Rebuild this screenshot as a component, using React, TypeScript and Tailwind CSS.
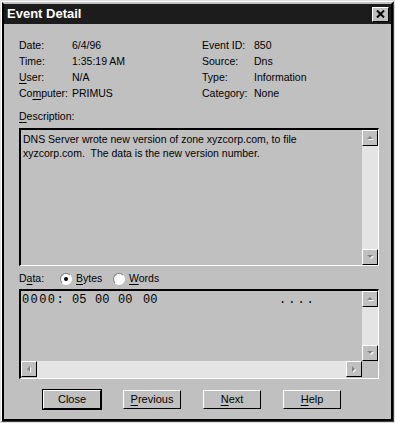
import React from 'react';

const font = { fontFamily: '"Liberation Sans", Arial, sans-serif' };

function U({ children }: { children: React.ReactNode }) {
  return <span className="underline underline-offset-[2px]">{children}</span>;
}

function Arrow({ dir }: { dir: 'up' | 'down' | 'left' | 'right' }) {
  const pts = {
    up: '2,6 5,3 8,6',
    down: '2,3 5,6 8,3',
    left: '6,2 3,5 6,8',
    right: '3,2 6,5 3,8',
  }[dir];
  return (
    <svg width="10" height="10" viewBox="0 0 10 10">
      <polygon points={pts} fill="#ffffff" transform="translate(1,1)" />
      <polygon points={pts} fill="#808080" />
    </svg>
  );
}

function ScrollBtn({ dir }: { dir: 'up' | 'down' | 'left' | 'right' }) {
  return (
    <div className="w-[16px] h-[16px] bg-[#c0c0c0] border-t border-l border-t-white border-l-white border-r border-b border-r-black border-b-black flex items-center justify-center shrink-0">
      <Arrow dir={dir} />
    </div>
  );
}

function VScroll() {
  return (
    <div className="w-[16px] flex flex-col h-full">
      <ScrollBtn dir="up" />
      <div className="flex-1 bg-[#e4e4e4]" />
      <ScrollBtn dir="down" />
    </div>
  );
}

function Radio({ on }: { on: boolean }) {
  return (
    <span className="inline-flex w-[12px] h-[12px] rounded-full bg-white border border-t-[#808080] border-l-[#808080] border-r-white border-b-white items-center justify-center">
      {on && <span className="w-[4px] h-[4px] rounded-full bg-black" />}
    </span>
  );
}

function Btn({ children, def }: { children: React.ReactNode; def?: boolean }) {
  return (
    <div className={def ? 'border border-black' : 'border border-transparent'}>
      <div className="w-[58px] h-[19px] bg-[#c0c0c0] border-t border-l border-t-white border-l-white border-r border-b border-r-black border-b-black flex items-center justify-center text-[11px] text-black">
        {children}
      </div>
    </div>
  );
}

export default function App() {
  const left = [
    ['Date:', '6/4/96'],
    ['Time:', '1:35:19 AM'],
    [<><U>U</U>ser:</>, 'N/A'],
    [<>Co<U>m</U>puter:</>, 'PRIMUS'],
  ];
  const right = [
    ['Event ID:', '850'],
    ['Source:', 'Dns'],
    ['Type:', 'Information'],
    ['Category:', 'None'],
  ];

  return (
    <div
      className="w-[395px] h-[423px] bg-[#c0c0c0] border border-[#dfdfdf] overflow-hidden"
      style={font}
    >
      <div className="w-full h-full border border-t-white border-l-white border-r-[#404040] border-b-[#404040]">
        <div className="w-full h-full border-2 border-l-black border-t-[#c0c0c0] border-r-black border-b-black flex flex-col">
          <div className="h-[20px] bg-[#1c1c1c] flex items-center justify-between pl-[3px] pr-[2px]">
            <span className="text-white font-bold text-[13px]">Event Detail</span>
            <div className="w-[17px] h-[15px] bg-[#c0c0c0] border-t border-l border-t-white border-l-white border-r border-b border-r-black border-b-black flex items-center justify-center">
              <svg width="9" height="8" viewBox="0 0 9 8">
                <path d="M1 0.5 L8 7.5 M8 0.5 L1 7.5" stroke="#000" strokeWidth="2" />
              </svg>
            </div>
          </div>

          <div className="flex-1 px-[15px] text-[10.5px] text-black">
            <div className="flex mt-[14px]">
              <div className="w-[183px]">
                {left.map(([l, v], i) => (
                  <div key={i} className="flex h-[16px] items-center">
                    <span className="w-[53px]">{l}</span>
                    <span>{v}</span>
                  </div>
                ))}
              </div>
              <div>
                {right.map(([l, v], i) => (
                  <div key={i} className="flex h-[16px] items-center">
                    <span className="w-[52px]">{l}</span>
                    <span>{v}</span>
                  </div>
                ))}
              </div>
            </div>

            <div className="h-[16px] mt-[7px] flex items-center">
              <span><U>D</U>escription:</span>
            </div>
            <div className="mt-[3px] h-[138px] w-[360px] border-t-2 border-l-2 border-t-black border-l-black border-b border-r border-b-white border-r-white flex">
              <div className="flex-1 pl-[2px] pt-[2px] leading-[14px]">
                DNS Server wrote new version of zone xyzcorp.com, to file
                <br />
                xyzcorp.com.&nbsp; The data is the new version number.
              </div>
              <VScroll />
            </div>

            <div className="h-[16px] mt-[5px] flex items-center">
              <span className="w-[41px]">D<U>a</U>ta:</span>
              <Radio on />
              <span className="ml-[4px] w-[37px]"><U>B</U>ytes</span>
              <Radio on={false} />
              <span className="ml-[4px]"><U>W</U>ords</span>
            </div>
            <div className="mt-[2px] h-[90px] w-[360px] border-t-2 border-l-2 border-t-black border-l-black border-b border-r border-b-white border-r-white flex flex-col">
              <div className="flex flex-1 min-h-0">
                <div
                  className="flex-1 pl-[1px] pt-[2px] text-[12px] flex leading-[14px]"
                  style={{ fontFamily: '"Liberation Mono", "Courier New", monospace' }}
                >
                  <span className="tracking-[1.4px] w-[50px]">0000:</span>
                  <span className="w-[23px]">05</span>
                  <span className="w-[23px]">00</span>
                  <span className="w-[25px]">00</span>
                  <span className="w-[136px]">00</span>
                  <span className="tracking-[2px]">....</span>
                </div>
                <VScroll />
              </div>
              <div className="flex h-[17px]">
                <div className="flex-1 flex">
                  <ScrollBtn dir="left" />
                  <div className="flex-1 bg-[#e4e4e4]" />
                  <ScrollBtn dir="right" />
                </div>
                <div className="w-[16px] bg-[#c0c0c0]" />
              </div>
            </div>

            <div className="flex mt-[10px] pl-[23px] gap-[20px]">
              <Btn def>Close</Btn>
              <Btn><U>P</U>revious</Btn>
              <Btn><U>N</U>ext</Btn>
              <Btn><U>H</U>elp</Btn>
            </div>
          </div>
        </div>
      </div>
    </div>
  );
}
